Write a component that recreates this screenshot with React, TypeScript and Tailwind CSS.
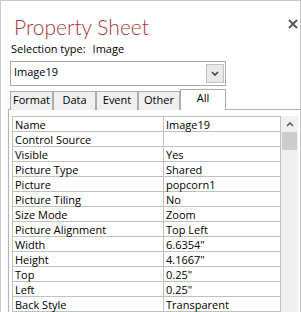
const rows: [string, string][] = [
  ['Name', 'Image19'],
  ['Control Source', ''],
  ['Visible', 'Yes'],
  ['Picture Type', 'Shared'],
  ['Picture', 'popcorn1'],
  ['Picture Tiling', 'No'],
  ['Size Mode', 'Zoom'],
  ['Picture Alignment', 'Top Left'],
  ['Width', '6.6354"'],
  ['Height', '4.1667"'],
  ['Top', '0.25"'],
  ['Left', '0.25"'],
  ['Back Style', 'Transparent'],
];

const tabs = [
  { label: 'Format', w: 'w-[43px]' },
  { label: 'Data', w: 'w-[43px]' },
  { label: 'Event', w: 'w-[42px]' },
  { label: 'Other', w: 'w-[42px]' },
];

const App = () => {
  return (
    <div className="w-[301px] h-[312px] overflow-hidden bg-white border-l border-t border-r border-[#c8c8c8] font-['Open_Sans',sans-serif] text-[11px] leading-[15px] text-black">
      {/* header */}
      <div className="flex items-start justify-between">
        <h1 className="ml-[13px] mt-[13px] font-['Lato',sans-serif] font-light text-[21px] leading-[25px] text-[#a4373a]">
          Property Sheet
        </h1>
        <svg className="mt-[18px] mr-[2px]" width="10" height="10" viewBox="0 0 10 10">
          <path d="M1 1 L9 9 M9 1 L1 9" stroke="#5a5a5a" strokeWidth="2" />
        </svg>
      </div>

      <div className="ml-[10px] mt-[2px] flex">
        <span>Selection type:</span>
        <span className="ml-[7px]">Image</span>
      </div>

      {/* object combo */}
      <div className="ml-[9px] mt-[5px] w-[216px] h-[25px] border border-[#a9a9a9] flex items-start justify-between">
        <span className="pl-[3px] pt-[2px]">Image19</span>
        <div className="mt-[2px] mr-[1px] w-[18px] h-[19px] bg-[#e9e9e9] border border-[#c2c2c2] flex items-center justify-center">
          <svg width="8" height="5" viewBox="0 0 8 5">
            <path d="M1 1 L4 4 L7 1" stroke="#444" strokeWidth="1.6" fill="none" />
          </svg>
        </div>
      </div>

      {/* tabs */}
      <div className="ml-[9px] mt-[3px] -mb-px h-[21px] flex items-end">
        {tabs.map((t) => (
          <div
            key={t.label}
            className={`${t.w} h-[19px] border-t border-l border-r border-[#adadad] bg-[#f0f0f0] text-center`}
          >
            {t.label}
          </div>
        ))}
        <div className="relative w-[46px] h-[21px] border-t border-l border-r border-[#adadad] bg-white text-center">
          All
        </div>
      </div>

      {/* panel */}
      <div className="ml-[7px] h-[220px] border-l border-t border-[#b4b4b4] pt-[6px] pl-[3px] flex items-start">
        <div className="w-[269px] border-l border-t border-r border-[#c0c0c0]">
          {rows.map(([name, value]) => (
            <div key={name} className="flex h-[15px] border-b border-[#c0c0c0]">
              <div className="w-[151px] border-r border-[#c0c0c0] pl-[2px] whitespace-nowrap">{name}</div>
              <div className="flex-1 pl-[2px] whitespace-nowrap">{value}</div>
            </div>
          ))}
        </div>
        <div className="w-[17px] h-[200px] bg-[#f0f0f0] flex flex-col items-center">
          <div className="h-[16px] flex items-center justify-center">
            <svg width="8" height="5" viewBox="0 0 8 5">
              <path d="M1 4 L4 1 L7 4" stroke="#606060" strokeWidth="1.6" fill="none" />
            </svg>
          </div>
          <div className="w-[15px] h-[18px] bg-[#cdcdcd]" />
        </div>
      </div>
    </div>
  );
};

export default App;
